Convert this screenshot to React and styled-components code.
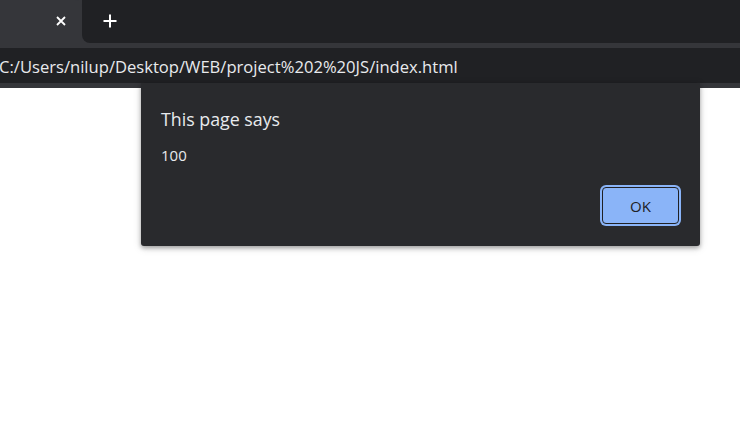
import React from 'react';
import styled, { createGlobalStyle } from 'styled-components';

const GlobalStyle = createGlobalStyle`
  html, body {
    margin: 0;
    padding: 0;
    background: #ffffff;
    overflow: hidden;
  }
  #root {
    height: 433px;
  }
`;

const App = () => {
  return (
    <>
      <GlobalStyle />
      <Window>
        <TabStrip>
          <Tab>
            <CloseIcon viewBox='0 0 10 10'>
              <path d='M1 1 L9 9 M9 1 L1 9' />
            </CloseIcon>
          </Tab>
          <TabRest>
            <NewTab viewBox='0 0 14 14'>
              <path d='M7 0.5 V13.5 M0.5 7 H13.5' />
            </NewTab>
          </TabRest>
        </TabStrip>
        <Toolbar>
          <Omnibox>
            <Url>C:/Users/nilup/Desktop/WEB/project%202%20JS/index.html</Url>
          </Omnibox>
        </Toolbar>
        <Page>
          <Dialog>
            <Title>This page says</Title>
            <Message>100</Message>
            <Actions>
              <OkButton>OK</OkButton>
            </Actions>
          </Dialog>
        </Page>
      </Window>
    </>
  );
};

export default App;

const Window = styled.div`
  height: 100%;
  display: flex;
  flex-direction: column;
  position: relative;
  font-family: 'Open Sans', 'Noto Sans', sans-serif;
`;

const TabStrip = styled.div`
  height: 43px;
  display: flex;
  background: #35363a;
`;

const Tab = styled.div`
  width: 82px;
  background: #35363a;
  border-top-right-radius: 7px;
  display: flex;
  align-items: center;
  justify-content: flex-end;
  padding-right: 16px;
  box-sizing: border-box;
`;

const TabRest = styled.div`
  flex: 1;
  background: #202124;
  border-bottom-left-radius: 8px;
  display: flex;
  align-items: center;
  padding-left: 21px;
`;

const CloseIcon = styled.svg`
  width: 10px;
  height: 10px;
  stroke: #ffffff;
  stroke-width: 1.8;
  fill: none;
  margin-bottom: 1px;
`;

const NewTab = styled.svg`
  width: 14px;
  height: 14px;
  stroke: #ffffff;
  stroke-width: 2;
  fill: none;
  margin-bottom: 1px;
`;

const Toolbar = styled.div`
  background: #35363a;
  padding: 5px 0;
`;

const Omnibox = styled.div`
  height: 35px;
  background: #202124;
  display: flex;
  align-items: center;
  overflow: hidden;
`;

const Url = styled.span`
  margin-left: -1px;
  margin-top: 1px;
  color: #e8eaed;
  font-size: 16.6px;
  white-space: nowrap;
`;

const Page = styled.div`
  flex: 1;
  background: #ffffff;
`;

const Dialog = styled.div`
  position: absolute;
  top: 83px;
  left: 141px;
  width: 559px;
  height: 163px;
  box-sizing: border-box;
  background: #292a2d;
  border-radius: 0 0 3px 3px;
  box-shadow: 0 2px 4px rgba(0, 0, 0, 0.3), 0 2px 8px rgba(0, 0, 0, 0.15);
  padding: 24px 21px 22px 20px;
  display: flex;
  flex-direction: column;
`;

const Title = styled.div`
  color: #e8eaed;
  font-size: 17.8px;
  line-height: 24px;
`;

const Message = styled.div`
  color: #e8eaed;
  font-size: 15px;
  line-height: 20px;
  margin-top: 14px;
`;

const Actions = styled.div`
  margin-top: auto;
  display: flex;
  justify-content: flex-end;
`;

const OkButton = styled.button`
  width: 77px;
  height: 37px;
  box-sizing: border-box;
  background: #8ab4f8;
  color: #202124;
  font-family: 'Open Sans', 'Noto Sans', sans-serif;
  font-size: 15px;
  border: 1px solid #202124;
  border-radius: 4px;
  box-shadow: 0 0 0 2px #8ab4f8;
  padding: 0;
  cursor: pointer;
`;
